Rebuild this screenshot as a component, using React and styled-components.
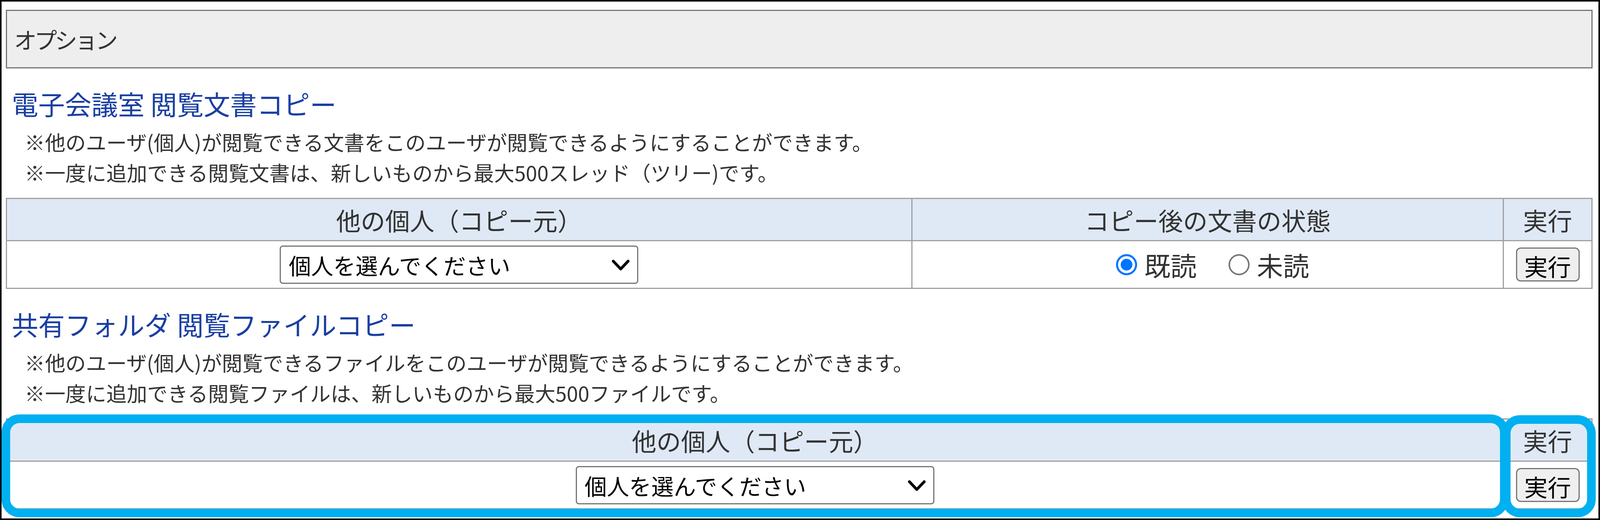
import React from "react";
import styled, { createGlobalStyle } from "styled-components";

const Global = createGlobalStyle`
  html, body { margin: 0; padding: 0; background: #fff; overflow: hidden; }
  body { font-family: "Noto Sans CJK JP", "Noto Sans", sans-serif; color: #333; }
`;

const Frame = styled.div`
  position: relative;
  width: 100vw;
  height: 100vh;
  box-sizing: border-box;
  border: 4px solid #000;
  padding: 21px 15px 0 11px;
  background: #fff;
  overflow: hidden;
`;

const PanelHeader = styled.div`
  height: 150px;
  box-sizing: border-box;
  border: 3px solid #777;
  background: #eeeeee;
  display: flex;
  align-items: center;
  padding-left: 18px;
  font-size: 58px;
  letter-spacing: -6px;
  color: #333;
`;

const SectionTitle = styled.h2`
  margin: 40px 0 0;
  padding-left: 15px;
  font-size: 68px;
  line-height: 100px;
  font-weight: normal;
  color: #1a3fa3;
`;

const Notes = styled.div`
  margin-top: 8px;
  padding-left: 48px;
  font-size: 52.3px;
  line-height: 78px;
  color: #333;
`;

const Note = styled.div``;

const Table = styled.table`
  margin-top: 27px;
  width: 100%;
  table-layout: fixed;
  border-collapse: collapse;
`;

const Col = styled.col`
  width: ${(p) => p.$w};
`;

const HeadCell = styled.th`
  height: 105px;
  padding: 0;
  border: 3px solid #a0a0a0;
  background: #dfe9f5;
  font-size: 63px;
  font-weight: normal;
  color: #333;
  text-align: center;
  vertical-align: middle;
  white-space: nowrap;
`;

const Cell = styled.td`
  height: 119px;
  padding: 0;
  border: 3px solid #a0a0a0;
  background: #fff;
  text-align: center;
  vertical-align: middle;
`;

const SelectWrap = styled.div`
  position: relative;
  display: inline-block;
  vertical-align: middle;
`;

const Select = styled.select`
  appearance: none;
  -webkit-appearance: none;
  width: 918px;
  height: 98px;
  box-sizing: border-box;
  border: 3px solid #767676;
  border-radius: 8px;
  background: #fff;
  padding: 0 80px 0 20px;
  font-family: "Noto Sans CJK JP", "Noto Sans", sans-serif;
  font-size: 57px;
  color: #000;
  outline: none;
`;

const Chevron = styled.svg`
  position: absolute;
  right: 22px;
  top: 36px;
  width: 46px;
  height: 28px;
  pointer-events: none;
`;

const RadioGroup = styled.div`
  display: inline-flex;
  align-items: center;
  gap: 82px;
  margin-left: 26px;
`;

const RadioLabel = styled.label`
  display: inline-flex;
  align-items: center;
  gap: 18px;
  font-size: 67px;
  color: #333;
`;

const Radio = styled.input.attrs({ type: "radio" })`
  appearance: none;
  -webkit-appearance: none;
  margin: 0;
  width: 54px;
  height: 54px;
  box-sizing: border-box;
  border-radius: 50%;
  border: 4px solid #767676;
  background: #fff;
  &:checked {
    border: 5px solid #0075ff;
    background: #0075ff;
    box-shadow: inset 0 0 0 7px #fff;
  }
`;

const Button = styled.button`
  width: 163px;
  height: 87px;
  box-sizing: border-box;
  border: 3px solid #767676;
  border-radius: 12px;
  background: #efefef;
  font-family: "Noto Sans CJK JP", "Noto Sans", sans-serif;
  font-size: 60px;
  color: #000;
  padding: 0;
  vertical-align: middle;
`;

const Highlight = styled.div`
  position: absolute;
  box-sizing: border-box;
  border: 22px solid #00b0f0;
  border-radius: 46px;
  pointer-events: none;
`;

function PersonSelect() {
  return (
    <SelectWrap>
      <Select defaultValue="">
        <option value="">個人を選んでください</option>
      </Select>
      <Chevron viewBox="0 0 46 28">
        <path d="M4 4 L23 24 L42 4" fill="none" stroke="#000" strokeWidth="7" strokeLinecap="round" strokeLinejoin="round" />
      </Chevron>
    </SelectWrap>
  );
}

function Cols() {
  return (
    <colgroup>
      <Col $w="57.1%" />
      <Col $w="37.31%" />
      <Col $w="5.59%" />
    </colgroup>
  );
}

export default function App() {
  return (
    <>
      <Global />
      <Frame>
        <PanelHeader>オプション</PanelHeader>

        <SectionTitle>電子会議室 閲覧文書コピー</SectionTitle>
        <Notes>
          <Note>※他のユーザ(個人)が閲覧できる文書をこのユーザが閲覧できるようにすることができます。</Note>
          <Note>※一度に追加できる閲覧文書は、新しいものから最大500スレッド（ツリー)です。</Note>
        </Notes>
        <Table>
          <Cols />
          <thead>
            <tr>
              <HeadCell>他の個人（コピー元）</HeadCell>
              <HeadCell>コピー後の文書の状態</HeadCell>
              <HeadCell>実行</HeadCell>
            </tr>
          </thead>
          <tbody>
            <tr>
              <Cell><PersonSelect /></Cell>
              <Cell>
                <RadioGroup>
                  <RadioLabel><Radio name="state" defaultChecked />既読</RadioLabel>
                  <RadioLabel><Radio name="state" />未読</RadioLabel>
                </RadioGroup>
              </Cell>
              <Cell><Button>実行</Button></Cell>
            </tr>
          </tbody>
        </Table>

        <SectionTitle>共有フォルダ 閲覧ファイルコピー</SectionTitle>
        <Notes>
          <Note>※他のユーザ(個人)が閲覧できるファイルをこのユーザが閲覧できるようにすることができます。</Note>
          <Note>※一度に追加できる閲覧ファイルは、新しいものから最大500ファイルです。</Note>
        </Notes>
        <Table>
          <Cols />
          <thead>
            <tr>
              <HeadCell colSpan={2}>他の個人（コピー元）</HeadCell>
              <HeadCell>実行</HeadCell>
            </tr>
          </thead>
          <tbody>
            <tr>
              <Cell colSpan={2}><PersonSelect /></Cell>
              <Cell><Button>実行</Button></Cell>
            </tr>
          </tbody>
        </Table>

        <Highlight style={{ left: 0, top: 1056, width: 3858, height: 263 }} />
        <Highlight style={{ left: 3841, top: 1058, width: 240, height: 261 }} />
      </Frame>
    </>
  );
}
